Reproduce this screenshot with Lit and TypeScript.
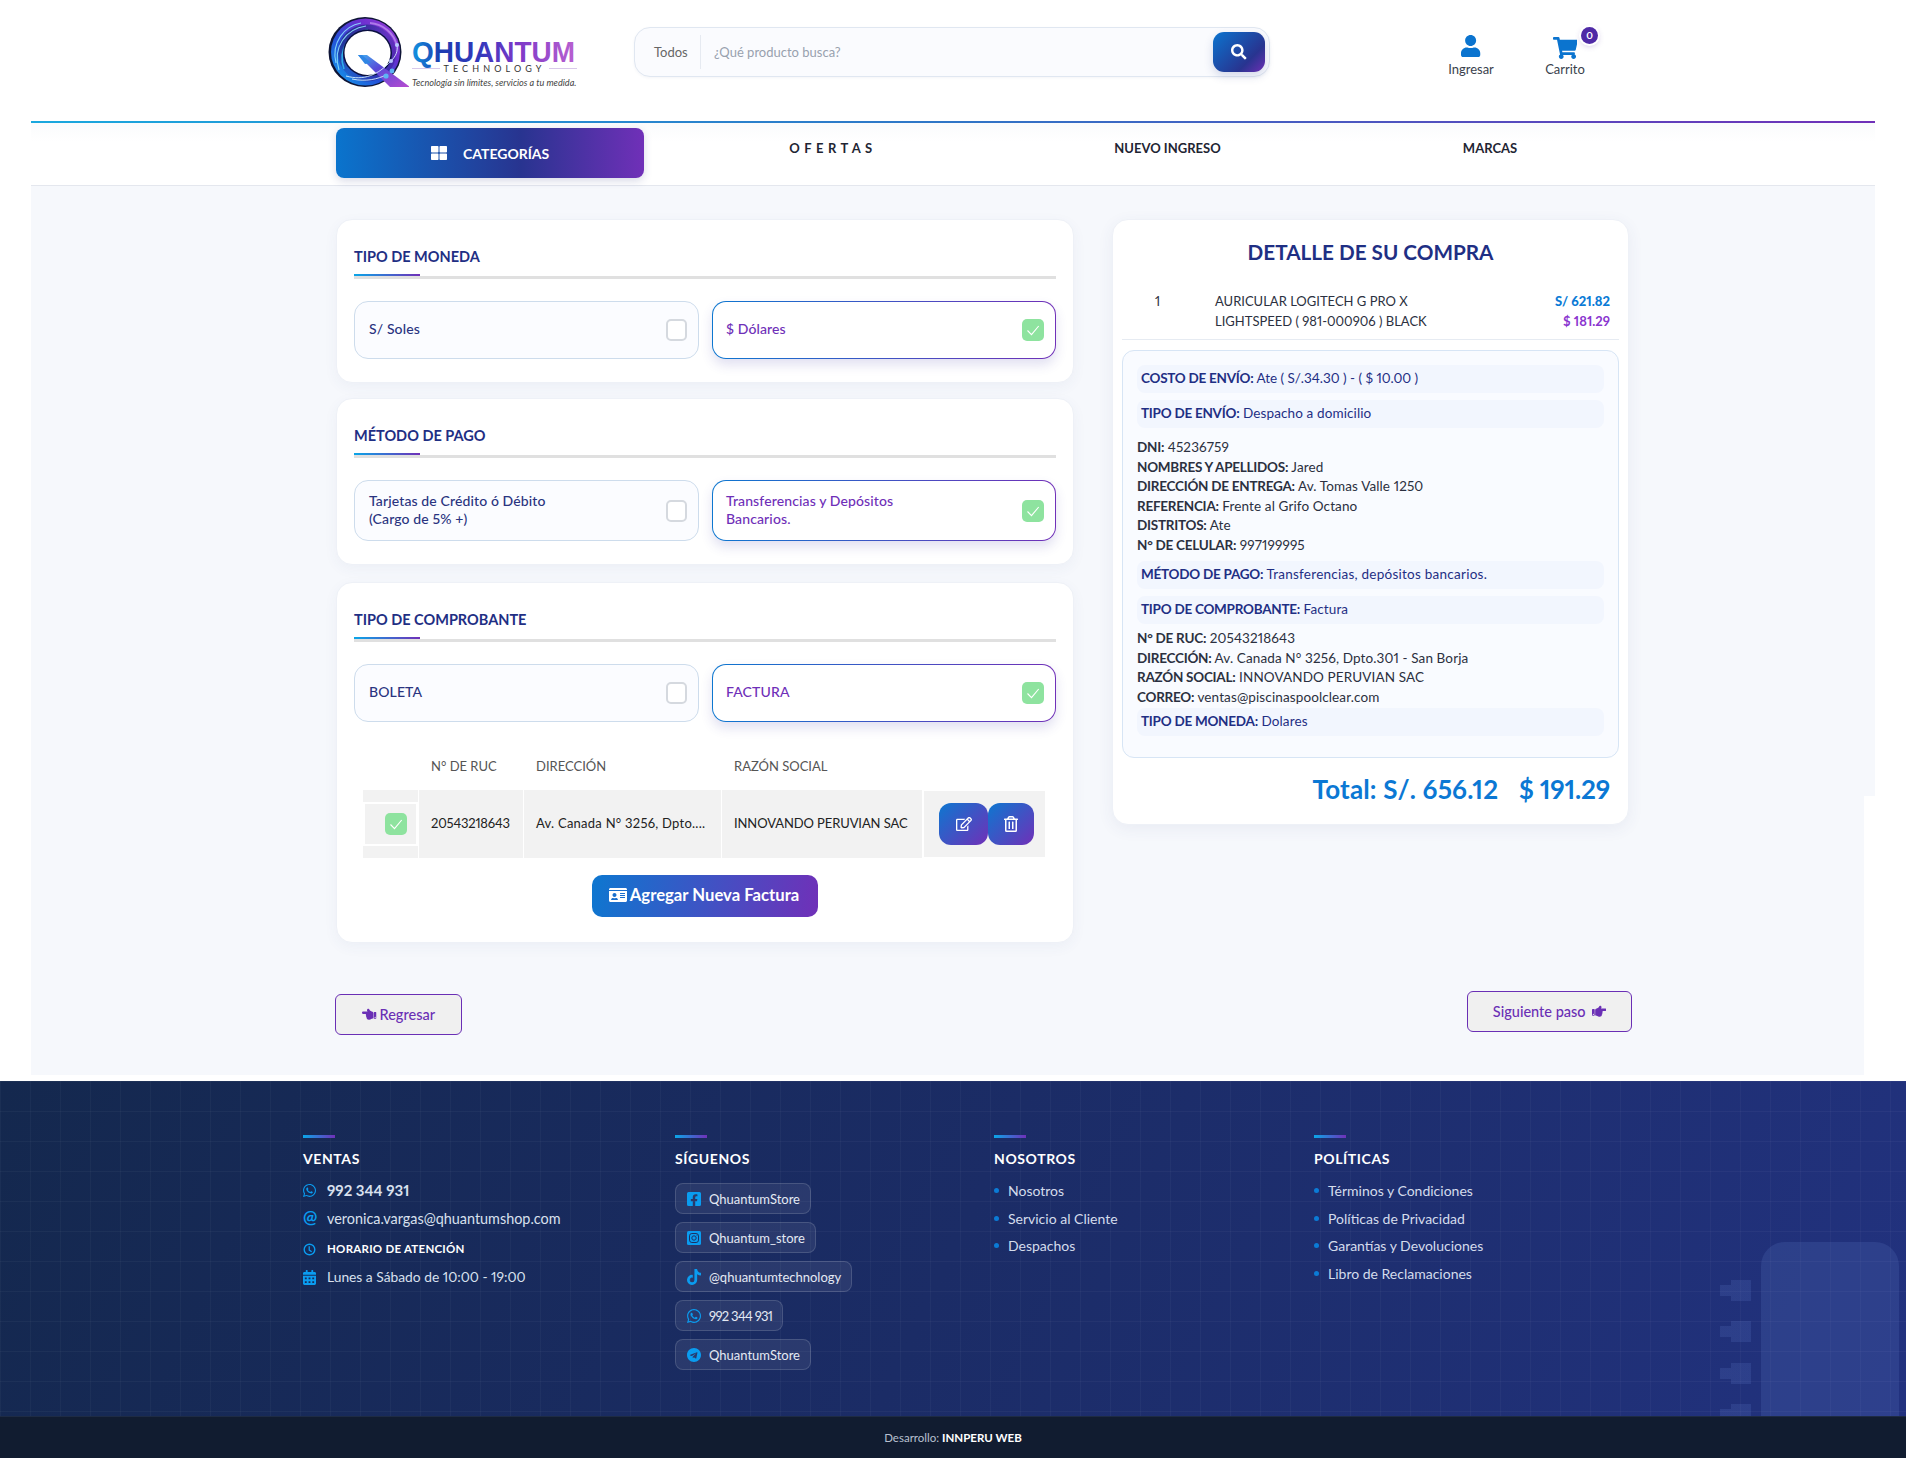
import { LitElement, html, css, svg } from "lit";
import { customElement } from "lit/decorators.js";

const ic = (vb: string, d: string, cls = "") =>
  html`<svg class="ico ${cls}" viewBox=${vb} aria-hidden="true"><path fill="currentColor" d=${d}></path></svg>`;

const P = {
  search: "M505 442.7L405.3 343c-4.5-4.5-10.6-7-17-7H372c27.6-35.3 44-79.7 44-128C416 93.1 322.9 0 208 0S0 93.1 0 208s93.1 208 208 208c48.3 0 92.7-16.4 128-44v16.3c0 6.4 2.5 12.5 7 17l99.7 99.7c9.4 9.4 24.6 9.4 33.9 0l28.3-28.3c9.4-9.4 9.4-24.6.1-34zM208 336c-70.7 0-128-57.2-128-128 0-70.7 57.2-128 128-128 70.7 0 128 57.2 128 128 0 70.7-57.2 128-128 128z",
  user: "M224 256c70.7 0 128-57.3 128-128S294.7 0 224 0 96 57.3 96 128s57.3 128 128 128zm89.6 32h-16.7c-22.2 10.2-46.9 16-72.9 16s-50.6-5.8-72.9-16h-16.7C60.2 288 0 348.2 0 422.4V464c0 26.5 21.5 48 48 48h352c26.5 0 48-21.5 48-48v-41.6c0-74.2-60.2-134.4-134.4-134.4z",
  cart: "M528.12 301.319l47.273-208C578.806 78.301 567.391 64 551.99 64H159.208l-9.166-44.81C147.758 8.021 137.93 0 126.529 0H24C10.745 0 0 10.745 0 24v16c0 13.255 10.745 24 24 24h69.883l70.248 343.435C147.325 417.1 136 435.222 136 456c0 30.928 25.072 56 56 56s56-25.072 56-56c0-15.674-6.447-29.835-16.824-40h209.647C430.447 426.165 424 440.326 424 456c0 30.928 25.072 56 56 56s56-25.072 56-56c0-22.172-12.888-41.332-31.579-50.405l5.517-24.276c3.413-15.018-8.002-29.319-23.403-29.319H218.117l-6.545-32h293.145c11.206 0 20.92-7.754 23.403-18.681z",
  grid: "M296 32h192c13.255 0 24 10.745 24 24v160c0 13.255-10.745 24-24 24H296c-13.255 0-24-10.745-24-24V56c0-13.255 10.745-24 24-24zm-80 0H24C10.745 32 0 42.745 0 56v160c0 13.255 10.745 24 24 24h192c13.255 0 24-10.745 24-24V56c0-13.255-10.745-24-24-24zM0 296v160c0 13.255 10.745 24 24 24h192c13.255 0 24-10.745 24-24V296c0-13.255-10.745-24-24-24H24c-13.255 0-24 10.745-24 24zm296 184h192c13.255 0 24-10.745 24-24V296c0-13.255-10.745-24-24-24H296c-13.255 0-24 10.745-24 24v160c0 13.255 10.745 24 24 24z",
  edit: "M402.3 344.9l32-32c5-5 13.7-1.5 13.7 5.7V464c0 26.5-21.5 48-48 48H48c-26.5 0-48-21.5-48-48V112c0-26.5 21.5-48 48-48h273.5c7.1 0 10.7 8.6 5.7 13.7l-32 32c-1.5 1.5-3.5 2.3-5.7 2.3H48v352h352V350.5c0-2.1.8-4.1 2.3-5.6zm156.6-201.8L296.3 405.7l-90.4 10c-26.2 2.9-48.5-19.2-45.6-45.6l10-90.4L432.9 17.1c22.9-22.9 59.9-22.9 82.7 0l43.2 43.2c22.9 22.9 22.9 60 .1 82.8zM460.1 174L402 115.9 216.2 301.8l-7.3 65.3 65.3-7.3L460.1 174zm64.8-79.7l-43.2-43.2c-4.1-4.1-10.8-4.1-14.8 0L436 82l58.1 58.1 30.9-30.9c4-4.2 4-10.8-.1-14.9z",
  trash: "M268 416h24a12 12 0 0 0 12-12V188a12 12 0 0 0-12-12h-24a12 12 0 0 0-12 12v216a12 12 0 0 0 12 12zM432 80h-82.41l-34-56.7A48 48 0 0 0 274.41 0H173.59a48 48 0 0 0-41.16 23.3L98.41 80H16A16 16 0 0 0 0 96v16a16 16 0 0 0 16 16h16v336a48 48 0 0 0 48 48h288a48 48 0 0 0 48-48V128h16a16 16 0 0 0 16-16V96a16 16 0 0 0-16-16zM171.84 50.91A6 6 0 0 1 177 48h94a6 6 0 0 1 5.15 2.91L293.61 80H154.39zM368 464H80V128h288zm-212-48h24a12 12 0 0 0 12-12V188a12 12 0 0 0-12-12h-24a12 12 0 0 0-12 12v216a12 12 0 0 0 12 12z",
  idcard: "M528 32H48C21.5 32 0 53.5 0 80v16h576V80c0-26.5-21.5-48-48-48zM0 432c0 26.5 21.5 48 48 48h480c26.5 0 48-21.5 48-48V128H0v304zm352-232c0-4.4 3.6-8 8-8h144c4.4 0 8 3.6 8 8v16c0 4.4-3.6 8-8 8H360c-4.4 0-8-3.6-8-8v-16zm0 64c0-4.4 3.6-8 8-8h144c4.4 0 8 3.6 8 8v16c0 4.4-3.6 8-8 8H360c-4.4 0-8-3.6-8-8v-16zm0 64c0-4.4 3.6-8 8-8h144c4.4 0 8 3.6 8 8v16c0 4.4-3.6 8-8 8H360c-4.4 0-8-3.6-8-8v-16zM176 192c35.3 0 64 28.7 64 64s-28.7 64-64 64-64-28.7-64-64 28.7-64 64-64zM67.1 396.2C75.5 370.5 99.6 352 128 352h8.2c12.3 5.1 25.7 8 39.8 8s27.6-2.9 39.8-8h8.2c28.4 0 52.5 18.5 60.9 44.2 3.2 9.9-5.2 19.8-15.6 19.8H82.7c-10.4 0-18.8-10-15.6-19.8z",
  hand: "M512 199.652c0 23.625-20.65 43.826-44.8 43.826h-99.851c16.34 17.048 18.346 49.766-6.299 70.944 14.288 22.829 2.147 53.017-16.45 62.315C353.574 425.878 322.654 448 272 448c-2.746 0-13.276-.203-16-.195-61.971.168-76.894-31.065-123.731-38.315C120.596 407.683 112 397.599 112 385.786V214.261l.002-.001c.011-18.366 10.607-35.889 28.464-43.845 28.886-12.994 95.413-49.038 107.534-77.323 7.797-18.194 21.384-29.084 40-29.092 34.222-.014 57.752 35.098 44.119 66.908-3.583 8.359-8.312 16.67-14.153 24.918H467.2c23.45 0 44.8 20.543 44.8 43.826zM96 200v192c0 13.255-10.745 24-24 24H24c-13.255 0-24-10.745-24-24V200c0-13.255 10.745-24 24-24h48c13.255 0 24 10.745 24 24zM68 368c0-11.046-8.954-20-20-20s-20 8.954-20 20 8.954 20 20 20 20-8.954 20-20z",
  wa: "M380.9 97.1C339 55.1 283.2 32 223.9 32c-122.4 0-222 99.6-222 222 0 39.1 10.2 77.3 29.6 111L0 480l117.7-30.9c32.4 17.7 68.9 27 106.1 27h.1c122.3 0 224.1-99.6 224.1-222 0-59.3-25.2-115-67.1-157zm-157 341.6c-33.2 0-65.7-8.9-94-25.7l-6.7-4-69.8 18.3L72 359.2l-4.4-7c-18.5-29.4-28.2-63.3-28.2-98.2 0-101.7 82.8-184.5 184.6-184.5 49.3 0 95.6 19.2 130.4 54.1 34.8 34.9 56.2 81.2 56.1 130.5 0 101.8-84.9 184.6-186.6 184.6zm101.2-138.2c-5.5-2.8-32.8-16.2-37.9-18-5.1-1.9-8.8-2.8-12.5 2.8-3.7 5.6-14.3 18-17.6 21.8-3.2 3.7-6.5 4.2-12 1.4-32.6-16.3-54-29.1-75.5-66-5.7-9.8 5.7-9.1 16.3-30.3 1.8-3.7.9-6.9-.5-9.7-1.4-2.8-12.5-30.1-17.1-41.2-4.5-10.8-9.1-9.3-12.5-9.5-3.2-.2-6.9-.2-10.6-.2-3.7 0-9.7 1.4-14.8 6.9-5.1 5.6-19.4 19-19.4 46.3 0 27.3 19.9 53.7 22.6 57.4 2.8 3.7 39.1 59.7 94.8 83.8 35.2 15.2 49 16.5 66.6 13.9 10.7-1.6 32.8-13.4 37.4-26.4 4.6-13 4.6-24.1 3.2-26.4-1.3-2.5-5-3.9-10.5-6.6z",
  fb: "M400 32H48A48 48 0 0 0 0 80v352a48 48 0 0 0 48 48h137.25V327.69h-63V256h63v-54.64c0-62.15 37-96.48 93.67-96.48 27.14 0 55.52 4.84 55.52 4.84v61h-31.27c-30.81 0-40.42 19.12-40.42 38.73V256h68.78l-11 71.69h-57.78V480H400a48 48 0 0 0 48-48V80a48 48 0 0 0-48-48z",
  tt: "M448,209.91a210.06,210.06,0,0,1-122.77-39.25V349.38A162.55,162.55,0,1,1,185,188.31V278.2a74.62,74.62,0,1,0,52.23,71.18V0l88,0a121.18,121.18,0,0,0,1.86,22.17h0A122.18,122.18,0,0,0,381,102.39a121.43,121.43,0,0,0,67,20.14Z",
  tg: "M248 8C111 8 0 119 0 256s111 248 248 248 248-111 248-248S385 8 248 8zm121.8 169.9l-40.7 191.8c-3 13.6-11.1 16.9-22.4 10.5l-62-45.7-29.9 28.8c-3.3 3.3-6.1 6.1-12.5 6.1l4.4-63.1 114.9-103.8c5-4.4-1.1-6.9-7.7-2.5l-142 89.4-61.2-19.1c-13.3-4.2-13.6-13.3 2.8-19.7l239.1-92.2c11.1-4 20.8 2.7 17.2 19.5z",
};

const igIcon = html`<svg class="ico" viewBox="0 0 14 16" aria-hidden="true"><rect x="0" y="1" width="14" height="14" rx="1.6" fill="currentColor"></rect><rect x="2.5" y="3.5" width="9" height="9" rx="2.4" fill="none" stroke="#1c3164" stroke-width="1"></rect><circle cx="7" cy="8" r="2.2" fill="none" stroke="#1c3164" stroke-width="1"></circle><circle cx="10" cy="5" r=".6" fill="#1c3164"></circle></svg>`;
const clockIcon = html`<svg class="ico" viewBox="0 0 24 24" aria-hidden="true"><circle cx="12" cy="12" r="9.8" fill="none" stroke="currentColor" stroke-width="2.6"></circle><path d="M11.5 6V13L16 16" fill="none" stroke="currentColor" stroke-width="2.4"></path></svg>`;
const calIcon = html`<svg class="ico" viewBox="0 0 448 512" aria-hidden="true"><path fill="currentColor" d="M0 464c0 26.5 21.5 48 48 48h352c26.5 0 48-21.5 48-48V192H0v272zm320-196c0-6.6 5.4-12 12-12h40c6.6 0 12 5.4 12 12v40c0 6.6-5.4 12-12 12h-40c-6.6 0-12-5.4-12-12v-40zm0 128c0-6.6 5.4-12 12-12h40c6.6 0 12 5.4 12 12v40c0 6.6-5.4 12-12 12h-40c-6.6 0-12-5.4-12-12v-40zM192 268c0-6.6 5.4-12 12-12h40c6.6 0 12 5.4 12 12v40c0 6.6-5.4 12-12 12h-40c-6.6 0-12-5.4-12-12v-40zm0 128c0-6.6 5.4-12 12-12h40c6.6 0 12 5.4 12 12v40c0 6.6-5.4 12-12 12h-40c-6.6 0-12-5.4-12-12v-40zM64 268c0-6.6 5.4-12 12-12h40c6.6 0 12 5.4 12 12v40c0 6.6-5.4 12-12 12H76c-6.6 0-12-5.4-12-12v-40zm0 128c0-6.6 5.4-12 12-12h40c6.6 0 12 5.4 12 12v40c0 6.6-5.4 12-12 12H76c-6.6 0-12-5.4-12-12v-40zM400 64h-48V16c0-8.8-7.2-16-16-16h-32c-8.8 0-16 7.2-16 16v48H160V16c0-8.8-7.2-16-16-16h-32c-8.8 0-16 7.2-16 16v48H48C21.5 64 0 85.5 0 112v48h448v-48c0-26.5-21.5-48-48-48z"></path></svg>`;

const qMark = svg`
<defs>
  <linearGradient id="qr" x1="0" y1="1" x2="1" y2="0"><stop offset="0" stop-color="#12a8ee"/><stop offset=".38" stop-color="#2450d8"/><stop offset=".68" stop-color="#6a2fd0"/><stop offset="1" stop-color="#a040d8"/></linearGradient>
  <linearGradient id="qd" x1="0" y1="0" x2="1" y2="1"><stop offset="0" stop-color="#1a2a78"/><stop offset=".5" stop-color="#2a2f9a" stop-opacity=".3"/><stop offset="1" stop-color="#3a1680" stop-opacity=".6"/></linearGradient>
  <linearGradient id="qt" x1="0" y1="0" x2="1" y2="1"><stop offset="0" stop-color="#42b0f0"/><stop offset=".4" stop-color="#5a48d8"/><stop offset="1" stop-color="#b84cd0"/></linearGradient>
</defs>
<ellipse cx="37" cy="35" rx="36.5" ry="35" fill="#0e1436"/>
<ellipse cx="37.5" cy="35" rx="34.5" ry="33.5" fill="url(#qr)"/>
<ellipse cx="39" cy="36" rx="29" ry="28.5" fill="url(#qd)"/>
<path d="M8 46C3 26 16 9 33 6M11 53C4 30 18 12 38 9" fill="none" stroke="#8fe6ff" stroke-width="1.1" opacity=".85"/>
<path d="M16 52C9 32 22 15 40 13" fill="none" stroke="#35c4f4" stroke-width="1.6" opacity=".8"/>
<path d="M42 6C55 7 66 16 69 29" fill="none" stroke="#c9a0f4" stroke-width="2" opacity=".65"/>
<ellipse cx="39.5" cy="36" rx="24.5" ry="23.5" fill="#0b1040"/>
<ellipse cx="39.5" cy="36" rx="23" ry="22" fill="#fff"/>
<path d="M30 38h9l43 32H62z" fill="url(#qt)"/>
<path d="M30 38h4l9 8-6 1z" fill="#2f86e4"/>
<path d="M24 62C38 65 50 62 58 58M18 59C36 64 50 58 63 44M63 44C68 39 70 34 69 28" fill="none" stroke="#d7f2ff" stroke-width=".9"/>
<circle cx="69" cy="28" r="2" fill="#b8c8ff"/><circle cx="63" cy="44" r="2" fill="#b8c8ff"/><circle cx="64" cy="54" r="2.4" fill="#5cb4f4"/><circle cx="58" cy="59" r="2.6" fill="#5cb4f4"/>
`;

const wordmark = svg`
<defs><linearGradient id="lq" x1="0" y1="0" x2="1" y2="0"><stop offset="0" stop-color="#1296e2"/><stop offset=".17" stop-color="#1c3cb0"/><stop offset=".42" stop-color="#3338bc"/><stop offset=".64" stop-color="#7a38c8"/><stop offset="1" stop-color="#b860d0"/></linearGradient></defs>
<text x="0" y="27.5" textLength="163" lengthAdjust="spacingAndGlyphs" font-family="Liberation Sans, sans-serif" font-weight="700" font-size="30" fill="url(#lq)">QHUANTUM</text>
`;

const check = html`<i class="box on"><svg viewBox="0 0 22 22" aria-hidden="true"><path d="M5.5 11.5l4 4.2 7.2-8.7" fill="none" stroke="#fff" stroke-width="1.1"></path></svg></i>`;
const card = (title: string, a: string, b: string, tall = false) => html`
  <div class="head">
    <div class="title">${title}</div>
    <div class="bar1"></div>
    <div class="bar2"></div>
  </div>
  <div class="opts ${tall ? "tall" : ""}">
    <div class="opt"><span>${a}</span><i class="box"></i></div>
    <div class="opt sel"><span>${b}</span>${check}</div>
  </div>
`;

@customElement("app-root")
export class AppRoot extends LitElement {
  static styles = css`
    :host { display: block; width: 1906px; background: #fff; color: #222; font-family: "Lato", "Noto Sans", sans-serif; font-size: 13.5px; font-variant-numeric: proportional-nums; }
    * { box-sizing: border-box; }
    .ico { display: block; width: 1em; height: 1em; }
    i { font-style: normal; }

    /* header */
    .top { display: flex; height: 121px; padding-left: 328px; }
    .logo { width: 249px; height: 75px; margin-top: 15px; margin-right: 57px; display: flex; flex: none; }
    .mark { width: 81px; height: 74px; flex: none; margin-top: 2px; }
    .lt { margin-left: 3px; width: 165px; display: flex; flex-direction: column; padding-top: 25px; }
    .lq { display: block; flex: none; width: 165px; height: 38px; margin: -6px 0 -8px; overflow: visible; }
    .lm { display: flex; align-items: center; gap: 4px; font: 400 9px/9px "Lato", sans-serif; letter-spacing: 4.1px; color: #333; white-space: nowrap; }
    .lm::before, .lm::after { content: ""; flex: 1; height: 1px; background: #d8c9ea; }
    .ls { font: italic 400 9.1px/11px "Lato", sans-serif; color: #444; white-space: nowrap; margin-top: 4px; }
    .search { width: 636px; height: 50px; margin-top: 27px; border: 1px solid #e0e7f1; border-radius: 16px; background: #fafbfe; display: flex; align-items: center; box-shadow: 0 1px 3px rgba(40,60,120,.05); }
    .all { width: 66px; padding-left: 19px; font-size: 13px; color: #666; line-height: 34px; border-right: 1px solid #e6eaf1; }
    .ph { flex: 1; padding-left: 13px; font-size: 13px; color: #98a1ae; }
    .sbtn { width: 52px; height: 40px; margin-right: 4px; border-radius: 11px; background: linear-gradient(135deg,#0b74cf,#283490 70%,#6d2fb4); color: #fff; display: flex; align-items: center; justify-content: center; font-size: 15.5px; box-shadow: 0 4px 10px rgba(40,60,140,.18); }
    .acts { display: flex; margin-left: 154px; padding-top: 35px; }
    .act { position: relative; width: 94px; display: flex; flex-direction: column; align-items: center; color: #0b74cf; }
    .act .ico { height: 22px; width: auto; }
    .act span { margin-top: 3px; font-size: 13px; line-height: 18px; color: #3a3f4d; }
    .cr { margin-top: 2px; margin-bottom: -2px; }
    .badge { position: absolute; left: 63px; top: -8px; width: 17px; height: 17px; border-radius: 50%; background: #4f2aa6; color: #fff; font-size: 10px; font-weight: 700; line-height: 17px; text-align: center; box-shadow: 0 0 0 2px #fff, 0 2px 6px rgba(80,40,160,.3); }

    /* nav */
    .nav-line { height: 2px; margin: 0 31px; background: linear-gradient(90deg,#1aa8de,#2f75c6 50%,#7030b8); }
    .nav { margin: 0 31px; height: 63px; background: linear-gradient(#fafbfc,#fff 30%); border-bottom: 1px solid #e4e7ee; padding-left: 305px; }
    .navr { display: grid; grid-template-columns: 308px 374px 299px 346px; height: 62px; }
    .cat { margin-top: 5px; height: 50px; border-radius: 8px; background: linear-gradient(90deg,#0a74cd,#283490 60%,#7030b8); box-shadow: 0 3px 8px rgba(40,50,120,.18); color: #fff; display: flex; align-items: center; padding-left: 95px; gap: 16px; font-size: 14px; font-weight: 700; }
    .cat .ico { font-size: 16px; }
    .ni { padding-top: 15px; text-align: center; font-size: 13px; line-height: 20px; font-weight: 700; color: #1f2533; }
    .sp { letter-spacing: 4.4px; padding-left: 4px; }

    /* main */
    .main { margin: 0 31px 6px; height: 889px; padding: 33px 0 0 305px; background:
      linear-gradient(#f6f8fc,#f6f8fc) 0 0 / 100% 610px no-repeat,
      linear-gradient(#f6f8fc,#f6f8fc) 0 0 / 1833px 100% no-repeat; }
    .cols { display: flex; gap: 38px; align-items: flex-start; }
    .left { width: 738px; flex: none; }
    .c { background: #fff; border: 1px solid #eef1f7; border-radius: 16px; box-shadow: 0 4px 14px rgba(50,70,130,.05); padding: 27px 17px 23px; }
    .c2 { margin-top: 15px; } .c3 { margin-top: 17px; padding-bottom: 25px; }
    .title { font-size: 14.5px; line-height: 20px; font-weight: 700; color: #1f2f84; }
    .bar1 { width: 66px; height: 2px; margin-top: 7px; background: linear-gradient(90deg,#0aa6e8,#7030b8); }
    .bar2 { height: 3px; background: #e0e0e0; }
    .opts { display: grid; grid-template-columns: 345px 344px; gap: 13px; margin-top: 22px; }
    .opt { height: 58px; display: flex; justify-content: space-between; align-items: center; padding: 0 11px 0 14px; border: 1px solid #cddcec; border-radius: 14px; background: #fbfcff; font-size: 14px; line-height: 18px; font-weight: 500; letter-spacing: .12px; color: #2a3480; }
    .tall .opt { height: 61px; }
    .opt span { display: block; width: 210px; margin-top: -2px; }
    .sel { border: 1.5px solid transparent; background: linear-gradient(#fff,#fff) padding-box, linear-gradient(90deg,#0d77d0,#7030b8) border-box; color: #6f2fb8; box-shadow: 0 6px 12px rgba(70,60,170,.16); padding-left: 13px; }
    .box { display: block; flex: none; width: 21px; height: 22px; border: 2px solid #d5d9df; border-radius: 5px; background: #fff; }
    .box.on { width: 22px; border: 0; background: #8ee39f; }
    .box svg { display: block; width: 22px; height: 22px; }

    .thd, .trw { display: grid; grid-template-columns: 55px 104px 197px 200px 122px; column-gap: 1px; margin-left: 9px; }
    .thd { margin-top: 23px; height: 45px; padding-bottom: 4px; align-items: center; color: #555; font-size: 13px; }
    .thd span { padding-left: 12px; }
    .trw { height: 68px; font-size: 13px; color: #222; }
    .trw > div { background: #f2f2f2; display: flex; align-items: center; padding: 0 0 2px 12px; white-space: nowrap; overflow: hidden; }
    .trw .ck { padding: 12px 0; }
    .trw .ckin { width: 100%; height: 44px; border: 2px solid #fff; display: flex; align-items: center; padding-left: 20px; }
    .trw .btns { margin: 1px 0 1px 1px; padding: 0 0 0 15px; }
    .trw .n { letter-spacing: -.2px; }
    .trw .a { letter-spacing: .25px; } .trw .r { letter-spacing: -.1px; }
    .rb { height: 42px; color: #fff; display: flex; align-items: center; justify-content: center; background: linear-gradient(135deg,#0d77d0,#7030b8); border-radius: 12px; font-size: 16px; }
    .rb.e { width: 49px; } .rb.d { width: 46px; }
    .addw { display: flex; justify-content: center; margin-top: 17px; }
    .add { width: 226px; height: 42px; padding: 0 2px 2px 0; border-radius: 10px; background: linear-gradient(100deg,#0d77d0,#7030b8); color: #fff; font-size: 16.7px; font-weight: 700; display: flex; align-items: center; justify-content: center; gap: 3px; }
    .add .ico { font-size: 18px; }

    .nx { display: flex; justify-content: space-between; align-items: flex-start; width: 1297px; margin: 48px 0 0 -1px; }
    .bt { height: 41px; border: 1.5px solid #6a2fb5; border-radius: 6px; background: #f0f0f0; color: #6a2fb5; font-size: 14.5px; font-weight: 500; display: flex; align-items: center; justify-content: center; gap: 3px; }
    .bt.b { width: 127px; margin-top: 3px; } .bt.f { width: 165px; gap: 6px; }
    .flip { transform: scaleX(-1); }

    /* detail */
    .right { width: 517px; flex: none; background: #fff; border: 1px solid #eef1f7; border-radius: 16px; box-shadow: 0 4px 16px rgba(50,70,130,.07); padding: 18px 9px 0; height: 606px; }
    .dt { font-size: 20.7px; line-height: 29px; font-weight: 700; color: #1f2f84; text-align: center; }
    .item { margin-top: 24px; padding-bottom: 8px; border-bottom: 1px solid #e6ebf2; display: grid; grid-template-columns: 93px 1fr auto; line-height: 20px; font-size: 13px; color: #2b3040; padding-right: 9px; }
    .item .q { padding-left: 33px; }
    .pr { text-align: right; font-weight: 700; }
    .pr b { display: block; color: #0b7bd6; } .pr em { display: block; font-style: normal; color: #8a35cf; }
    .bx { margin-top: 10px; height: 408px; border: 1px solid #d7e5f5; border-radius: 12px; background: #f9fbff; padding: 14px 14px 0; letter-spacing: .12px; }
    .st { height: 28px; margin-bottom: 7px; border-radius: 8px; background: #f2f6fe; line-height: 27px; padding-left: 4px; color: #1f2f84; }
    .st.t { letter-spacing: -.03px; } .st.w { letter-spacing: .25px; }
    .st b, .ln b { font-weight: 700; letter-spacing: -.25px; }
    .g { line-height: 19.5px; color: #2b3040; }
    .g1 { margin: 10.3px 0 5.7px; } .g2 { margin: -1.7px 0 .7px; }
    .total { margin-top: 14px; padding-right: 9px; text-align: right; font-size: 26px; line-height: 34px; font-weight: 700; color: #0b78d4; letter-spacing: .15px; }
    .total span { margin-left: 14px; letter-spacing: -.2px; }

    /* footer */
    .ft { position: relative; overflow: hidden; height: 335px; padding: 54px 0 0 303px; color: #d9e0ee; background:
      linear-gradient(rgba(255,255,255,.035) 1px, transparent 1px) 0 0 / 30px 30px,
      linear-gradient(90deg, rgba(255,255,255,.03) 1px, transparent 1px) 0 0 / 30px 30px,
      linear-gradient(115deg,#14284e,#1b2c66 50%,#22327f); }
    .deco { position: absolute; left: 1761px; top: 161px; width: 138px; height: 200px; border-radius: 24px 24px 0 0; background: rgba(110,140,220,.16); }
    .nt { position: absolute; left: 1720px; width: 31px; height: 21px; background: linear-gradient(rgba(110,140,220,.16),rgba(110,140,220,.16)) 11px 0 / 20px 21px no-repeat, linear-gradient(rgba(110,140,220,.16),rgba(110,140,220,.16)) 0 5px / 11px 11px no-repeat; }
    .fc { position: relative; display: grid; grid-template-columns: 372px 319px 320px 1fr; }
    .fb { width: 32px; height: 3px; background: linear-gradient(90deg,#0aa6e8,#7030b8); }
    .ftt { margin-top: 11px; font-size: 14px; line-height: 20px; font-weight: 700; letter-spacing: .6px; color: #fff; }
    .row { display: flex; align-items: center; gap: 11px; font-size: 14.4px; line-height: 20px; }
    .row .ico { color: #0a9cf0; font-size: 15px; width: 13px; flex: none; }
    .row.big { margin-top: 11px; font-size: 15px; font-weight: 700; }
    .row.em { margin-top: 9px; }
    .row.hr { margin-top: 10px; font-size: 11.5px; font-weight: 700; color: #fff; letter-spacing: .25px; }
    .row.hh { margin-top: 8px; font-size: 13.8px; }
    .at { color: #0a9cf0; font-size: 17px; font-weight: 700; width: 13px; text-align: center; line-height: 16px; margin-top: -4px; }
    .chips { margin-top: 14px; display: flex; flex-direction: column; align-items: flex-start; gap: 8px; }
    .chip { height: 31px; display: flex; align-items: center; gap: 8px; padding: 0 10px 0 11px; border: 1px solid rgba(255,255,255,.14); border-radius: 8px; background: rgba(255,255,255,.07); font-size: 13px; color: #e4e9f3; }
    .chip .ico { font-size: 16px; color: #0a9cf0; width: 14px; flex: none; }
    .chip .dg { letter-spacing: -.7px; }
    .ul { margin-top: 8px; }
    .li { display: flex; align-items: center; height: 27.6px; gap: 9px; font-size: 14px; color: #d4dcec; }
    .li::before { content: ""; width: 5px; height: 5px; border-radius: 50%; background: #0b7bd6; }
    .bot { height: 42px; background: #111c30; border-top: 1px solid #1e2b44; color: #b8c0d0; font-size: 11.5px; text-align: center; line-height: 41px; }
    .bot b { color: #fff; }
  `;

  render() {
    return html`
      <div class="top">
        <div class="logo">
          <svg class="mark" viewBox="0 0 81 74" aria-hidden="true">${qMark}</svg>
          <div class="lt">
            <svg class="lq" viewBox="0 0 165 38" role="img" aria-label="QHUANTUM">${wordmark}</svg>
            <div class="lm">TECHNOLOGY</div>
            <div class="ls">Tecnología sin límites, servicios a tu medida.</div>
          </div>
        </div>
        <div class="search">
          <div class="all">Todos</div>
          <div class="ph">¿Qué producto busca?</div>
          <div class="sbtn">${ic("0 0 512 512", P.search)}</div>
        </div>
        <div class="acts">
          <div class="act">${ic("0 0 448 512", P.user)}<span>Ingresar</span></div>
          <div class="act">${ic("0 0 576 512", P.cart, "cr")}<span>Carrito</span><div class="badge">0</div></div>
        </div>
      </div>
      <div class="nav-line"></div>
      <div class="nav">
        <div class="navr">
          <div class="cat">${ic("0 0 512 512", P.grid)}<span>CATEGORÍAS</span></div>
          <div class="ni sp">OFERTAS</div>
          <div class="ni">NUEVO INGRESO</div>
          <div class="ni">MARCAS</div>
        </div>
      </div>

      <div class="main">
        <div class="cols">
          <div class="left">
            <div class="c">${card("TIPO DE MONEDA", "S/ Soles", "$ Dólares")}</div>
            <div class="c c2">${card("MÉTODO DE PAGO", "Tarjetas de Crédito ó Débito (Cargo de 5% +)", "Transferencias y Depósitos Bancarios.", true)}</div>
            <div class="c c3">
              ${card("TIPO DE COMPROBANTE", "BOLETA", "FACTURA")}
              <div class="thd"><i></i><span>N° DE RUC</span><span>DIRECCIÓN</span><span>RAZÓN SOCIAL</span><i></i></div>
              <div class="trw">
                <div class="ck"><div class="ckin">${check}</div></div>
                <div class="n">20543218643</div>
                <div class="a">Av. Canada N° 3256, Dpto....</div>
                <div class="r">INNOVANDO PERUVIAN SAC</div>
                <div class="btns"><span class="rb e">${ic("0 0 576 512", P.edit)}</span><span class="rb d">${ic("0 0 448 512", P.trash)}</span></div>
              </div>
              <div class="addw"><div class="add">${ic("0 0 576 512", P.idcard)}<span>Agregar Nueva Factura</span></div></div>
            </div>
          </div>
          <div class="right">
            <div class="dt">DETALLE DE SU COMPRA</div>
            <div class="item">
              <div class="q">1</div>
              <div>AURICULAR LOGITECH G PRO X<br />LIGHTSPEED ( 981-000906 ) BLACK</div>
              <div class="pr"><b>S/ 621.82</b><em>$ 181.29</em></div>
            </div>
            <div class="bx">
              <div class="st t"><b>COSTO DE ENVÍO:</b> Ate ( S/.34.30 ) - ( $ 10.00 )</div>
              <div class="st"><b>TIPO DE ENVÍO:</b> Despacho a domicilio</div>
              <div class="g g1">
                <div class="ln"><b>DNI:</b> 45236759</div>
                <div class="ln"><b>NOMBRES Y APELLIDOS:</b> Jared</div>
                <div class="ln"><b>DIRECCIÓN DE ENTREGA:</b> Av. Tomas Valle 1250</div>
                <div class="ln"><b>REFERENCIA:</b> Frente al Grifo Octano</div>
                <div class="ln"><b>DISTRITOS:</b> Ate</div>
                <div class="ln"><b>N° DE CELULAR:</b> 997199995</div>
              </div>
              <div class="st w"><b>MÉTODO DE PAGO:</b> Transferencias, depósitos bancarios.</div>
              <div class="st"><b>TIPO DE COMPROBANTE:</b> Factura</div>
              <div class="g g2">
                <div class="ln"><b>N° DE RUC:</b> 20543218643</div>
                <div class="ln"><b>DIRECCIÓN:</b> Av. Canada N° 3256, Dpto.301 - San Borja</div>
                <div class="ln"><b>RAZÓN SOCIAL:</b> INNOVANDO PERUVIAN SAC</div>
                <div class="ln"><b>CORREO:</b> ventas@piscinaspoolclear.com</div>
              </div>
              <div class="st"><b>TIPO DE MONEDA:</b> Dolares</div>
            </div>
            <div class="total">Total: S/. 656.12 <span>$ 191.29</span></div>
          </div>
        </div>
        <div class="nx">
          <div class="bt b">${ic("0 0 512 512", P.hand, "flip")}<span>Regresar</span></div>
          <div class="bt f"><span>Siguiente paso</span>${ic("0 0 512 512", P.hand)}</div>
        </div>
      </div>

      <div class="ft">
        <div class="deco"></div>
        <div class="nt" style="top:199px"></div><div class="nt" style="top:240px"></div><div class="nt" style="top:282px"></div><div class="nt" style="top:323px"></div>
        <div class="fc">
          <div>
            <div class="fb"></div>
            <div class="ftt">VENTAS</div>
            <div class="row big">${ic("0 0 448 512", P.wa)}<span>992 344 931</span></div>
            <div class="row em"><i class="at">@</i><span>veronica.vargas@qhuantumshop.com</span></div>
            <div class="row hr">${clockIcon}<span>HORARIO DE ATENCIÓN</span></div>
            <div class="row hh">${calIcon}<span>Lunes a Sábado de 10:00 - 19:00</span></div>
          </div>
          <div>
            <div class="fb"></div>
            <div class="ftt">SÍGUENOS</div>
            <div class="chips">
              <div class="chip">${ic("0 0 448 512", P.fb)}<span>QhuantumStore</span></div>
              <div class="chip">${igIcon}<span>Qhuantum_store</span></div>
              <div class="chip">${ic("0 0 448 512", P.tt)}<span>@qhuantumtechnology</span></div>
              <div class="chip">${ic("0 0 448 512", P.wa)}<span class="dg">992 344 931</span></div>
              <div class="chip">${ic("0 0 496 512", P.tg)}<span>QhuantumStore</span></div>
            </div>
          </div>
          <div>
            <div class="fb"></div>
            <div class="ftt">NOSOTROS</div>
            <div class="ul"><div class="li">Nosotros</div><div class="li">Servicio al Cliente</div><div class="li">Despachos</div></div>
          </div>
          <div>
            <div class="fb"></div>
            <div class="ftt">POLÍTICAS</div>
            <div class="ul"><div class="li">Términos y Condiciones</div><div class="li">Políticas de Privacidad</div><div class="li">Garantías y Devoluciones</div><div class="li">Libro de Reclamaciones</div></div>
          </div>
        </div>
      </div>
      <div class="bot">Desarrollo: <b>INNPERU WEB</b></div>
    `;
  }
}
